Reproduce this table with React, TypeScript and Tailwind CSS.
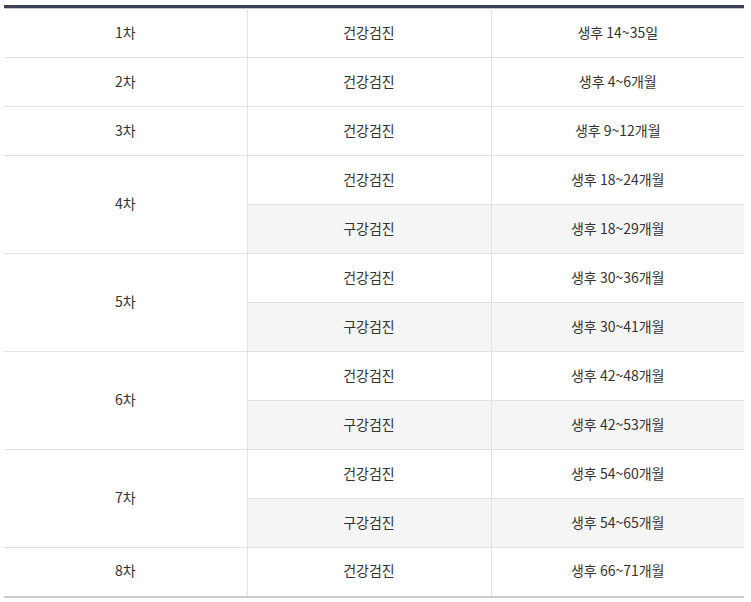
import React from 'react';

type Row = { round: string; span?: number; type: string; age: string; shaded?: boolean; skipRound?: boolean };

const rows: Row[] = [
    { round: '1차', type: '건강검진', age: '생후 14~35일' },
    { round: '2차', type: '건강검진', age: '생후 4~6개월' },
    { round: '3차', type: '건강검진', age: '생후 9~12개월' },
    { round: '4차', span: 2, type: '건강검진', age: '생후 18~24개월' },
    { round: '', skipRound: true, type: '구강검진', age: '생후 18~29개월', shaded: true },
    { round: '5차', span: 2, type: '건강검진', age: '생후 30~36개월' },
    { round: '', skipRound: true, type: '구강검진', age: '생후 30~41개월', shaded: true },
    { round: '6차', span: 2, type: '건강검진', age: '생후 42~48개월' },
    { round: '', skipRound: true, type: '구강검진', age: '생후 42~53개월', shaded: true },
    { round: '7차', span: 2, type: '건강검진', age: '생후 54~60개월' },
    { round: '', skipRound: true, type: '구강검진', age: '생후 54~65개월', shaded: true },
    { round: '8차', type: '건강검진', age: '생후 66~71개월' },
];

export default function App() {
    return (
        <div className="w-[751px] h-[602px] bg-white pt-[5px] pl-[4px]" style={{ fontFamily: '"Noto Sans CJK KR", "Noto Sans", sans-serif' }}>
            <div className="w-[740px] border-t-[3px] border-[#3e4153]">
                <table className="w-full border-collapse table-fixed text-[14px] text-[#333]">
                    <colgroup>
                        <col className="w-[243px]" />
                        <col className="w-[244px]" />
                        <col />
                    </colgroup>
                    <tbody>
                        {rows.map((r, i) => {
                            const first = i === 0;
                            const last = i === rows.length - 1;
                            const rowBorder = `${first ? 'border-t border-t-[#c4c5ce]' : ''} ${last ? 'border-b-2 border-b-[#c9cace]' : 'border-b border-b-[#e2e2e2]'}`;
                            return (
                                <tr key={i} className="h-[49px]">
                                    {!r.skipRound && (
                                        <td rowSpan={r.span ?? 1} className={`text-center align-middle pb-[2px] bg-white border-r border-r-[#e2e2e2] ${rowBorder} ${r.span ? 'border-b border-b-[#e2e2e2]' : ''}`}>
                                            {r.round}
                                        </td>
                                    )}
                                    <td className={`text-center align-middle pb-[2px] border-r border-r-[#e2e2e2] ${rowBorder} ${r.shaded ? 'bg-[#f5f5f5]' : 'bg-white'}`}>
                                        {r.type}
                                    </td>
                                    <td className={`text-center align-middle pb-[2px] ${rowBorder} ${r.shaded ? 'bg-[#f5f5f5]' : 'bg-white'}`}>
                                        {r.age}
                                    </td>
                                </tr>
                            );
                        })}
                    </tbody>
                </table>
            </div>
        </div>
    );
}
